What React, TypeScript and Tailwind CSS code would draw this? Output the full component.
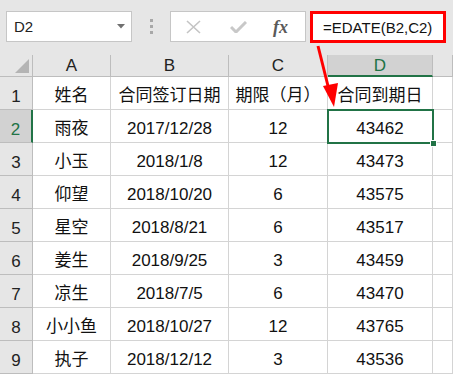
import React from "react";

const font = { fontFamily: '"Liberation Sans", "Noto Sans CJK SC", sans-serif' };

const cols = [
  { key: "A", w: "w-[78px]" },
  { key: "B", w: "w-[118px]" },
  { key: "C", w: "w-[99px]" },
  { key: "D", w: "w-[105px]" },
  { key: "", w: "w-[20px]" },
];

const rows: string[][] = [
  ["姓名", "合同签订日期", "期限（月）", "合同到期日", ""],
  ["雨夜", "2017/12/28", "12", "43462", ""],
  ["小玉", "2018/1/8", "12", "43473", ""],
  ["仰望", "2018/10/20", "6", "43575", ""],
  ["星空", "2018/8/21", "6", "43517", ""],
  ["姜生", "2018/9/25", "3", "43459", ""],
  ["凉生", "2018/7/5", "6", "43470", ""],
  ["小小鱼", "2018/10/27", "12", "43765", ""],
  ["执子", "2018/12/12", "3", "43536", ""],
];

export default function App() {
  return (
    <div className="relative w-[453px] h-[383px] overflow-hidden bg-white text-[#111]" style={font}>
      {/* top bar */}
      <div className="h-[55px] bg-[#e6e6e6] flex items-start pt-[11px] pl-[6px]">
        <div className="w-[126px] h-[31px] bg-white border border-[#c6c6c6] flex items-center pl-[7px] pr-[6px] justify-between">
          <span className="text-[15px] leading-none text-[#222]">D2</span>
          <svg width="8" height="5" viewBox="0 0 8 5"><path d="M0 0 L8 0 L4 4.5 Z" fill="#707070" /></svg>
        </div>
        <div className="w-[38px] h-[31px] flex flex-col items-center justify-center gap-[3px]">
          <div className="w-[3px] h-[3px] bg-[#a8a8a8]" />
          <div className="w-[3px] h-[3px] bg-[#a8a8a8]" />
          <div className="w-[3px] h-[3px] bg-[#a8a8a8]" />
        </div>
        <div className="w-[136px] h-[31px] bg-white border border-[#c6c6c6] flex items-center">
          <svg className="ml-[15px]" width="15" height="14" viewBox="0 0 15 14">
            <path d="M1 1 L14 13 M14 1 L1 13" stroke="#c4c4c4" strokeWidth="1.6" fill="none" />
          </svg>
          <svg className="ml-[29px]" width="17" height="12" viewBox="0 0 17 12">
            <path d="M1 6 L6 11 L16 1" stroke="#c8c8c8" strokeWidth="3" fill="none" />
          </svg>
          <span
            className="ml-[26px] text-[18px] italic font-bold text-[#5a5a5a] leading-none"
            style={{ fontFamily: '"Liberation Serif", serif' }}
          >
            fx
          </span>
        </div>
        <div className="ml-[4px] w-[136px] h-[32px] border-[3px] border-[#ff0000] bg-white flex items-center pl-[10px]">
          <span className="text-[15px] leading-none text-[#111]">=EDATE(B2,C2)</span>
        </div>
      </div>

      {/* header row */}
      <div className="flex h-[22px] bg-[#e6e6e6]">
        <div className="w-[33px] h-full border-r border-b border-[#bdbdbd] relative">
          <svg className="absolute right-[3px] bottom-[3px]" width="14" height="14" viewBox="0 0 14 14">
            <path d="M14 0 L14 14 L0 14 Z" fill="#b4b4b4" />
          </svg>
        </div>
        {cols.map((c, idx) => {
          const sel = c.key === "D";
          return (
            <div
              key={idx}
              className={
                c.w +
                " h-full flex items-center justify-center border-r text-[17px] leading-none " +
                (sel
                  ? "bg-[#d2d2d2] border-b-2 border-b-[#217346] border-r-[#bdbdbd] text-[#217346]"
                  : "border-b border-[#bdbdbd] text-[#222]")
              }
            >
              {c.key}
            </div>
          );
        })}
      </div>

      {/* body rows */}
      {rows.map((r, i) => {
        const sel = i === 1;
        return (
          <div key={i} className="flex h-[33px]">
            <div
              className={
                "w-[33px] h-full flex items-end justify-center pb-[4px] border-b border-[#bdbdbd] text-[17px] leading-none " +
                (sel ? "bg-[#d2d2d2] border-r-2 border-r-[#217346] text-[#217346]" : "bg-[#e6e6e6] border-r border-r-[#bdbdbd] text-[#222]")
              }
            >
              {i + 1}
            </div>
            {r.map((v, j) => (
              <div
                key={j}
                className={
                  cols[j].w +
                  " h-full flex items-end justify-center pb-[5px] border-r border-b border-[#d4d4d4] text-[17px] leading-none whitespace-nowrap"
                }
              >
                {v}
              </div>
            ))}
          </div>
        );
      })}

      {/* selection box */}
      <div className="absolute left-[327px] top-[109px] w-[107px] h-[35px] border-2 border-[#217346]" />
      <div className="absolute left-[430px] top-[140px] w-[7px] h-[7px] bg-[#217346] border border-white" />

      {/* arrow */}
      <svg className="absolute left-0 top-0" width="453" height="383" viewBox="0 0 453 383">
        <path d="M318 46 L329 90" stroke="#ff0000" strokeWidth="3" fill="none" />
        <path d="M323 86 L338 83 L334 107 Z" fill="#ff0000" />
      </svg>
    </div>
  );
}
